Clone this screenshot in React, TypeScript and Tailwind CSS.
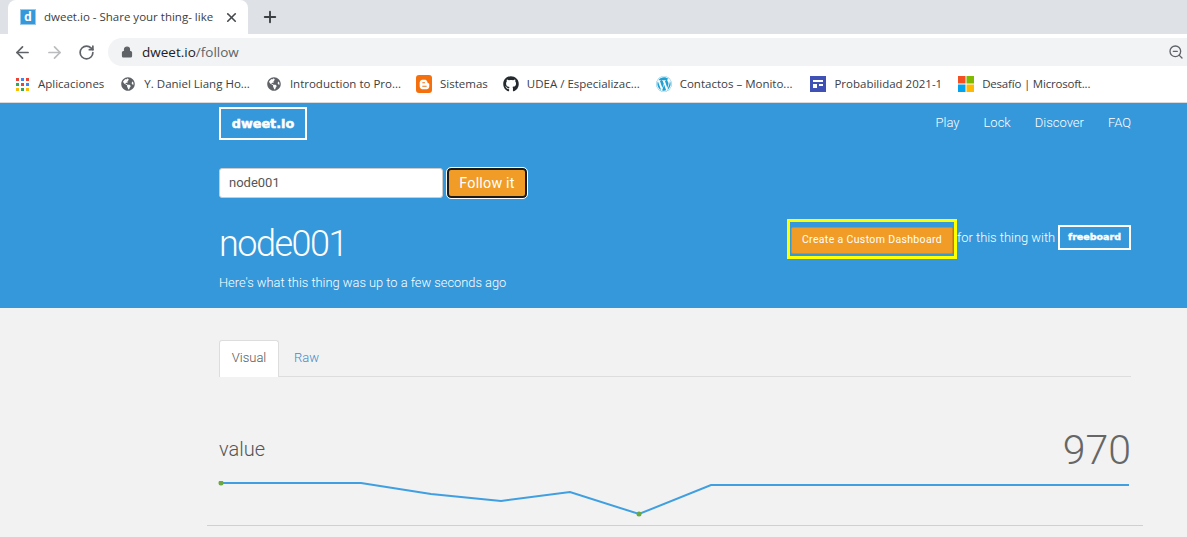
import { ArrowLeft, ArrowRight, RotateCw, Lock, X, Plus, ZoomOut } from "lucide-react";
import { FaGithub, FaWordpress, FaGlobeAmericas, FaBloggerB } from "react-icons/fa";

function Bookmark({ icon, label, className }: { icon: React.ReactNode; label: string; className: string }) {
  return (
    <div className={`flex items-center gap-[8px] ${className}`}>
      <span className="flex w-[16px] h-[16px] items-center justify-center shrink-0">{icon}</span>
      <span className="text-[11.5px] text-[#3c4043] whitespace-nowrap">{label}</span>
    </div>
  );
}

function Apps() {
  const c = ["#ea4335", "#4285f4", "#ea4335", "#34a853", "#ea4335", "#4285f4", "#fbbc05", "#34a853", "#fbbc05"];
  return (
    <div className="grid grid-cols-3 gap-[2px] w-[13px]">
      {c.map((x, i) => (
        <span key={i} className="w-[3px] h-[3px]" style={{ background: x }} />
      ))}
    </div>
  );
}

const globe = <FaGlobeAmericas className="text-[#5f6368] text-[14px]" />;

export default function App() {
  return (
    <div className="w-[1187px] h-[537px] overflow-hidden bg-[#f2f2f2] font-['Roboto',sans-serif]">
      <div className="h-[34px] bg-[#dee1e6] flex items-end pl-[8px]">
        <div className="w-[240px] h-[34px] bg-white rounded-t-[8px] flex items-center pl-[12px]">
          <span className="w-[16px] h-[16px] bg-[#3498db] border border-[#9cc9e8] flex items-center justify-center text-white text-[13px] font-bold shrink-0">d</span>
          <span className="ml-[8px] w-[170px] whitespace-nowrap text-[11.5px] text-[#3c4043] [font-family:'Open_Sans',sans-serif]">dweet.io - Share your thing- like</span>
          <X size={15} strokeWidth={2.6} className="ml-[10px] text-[#45494d] shrink-0" />
        </div>
        <Plus size={18} strokeWidth={2.5} className="ml-[13px] mb-[8px] text-[#3c4043]" />
      </div>

      <div className="h-[32px] bg-white flex items-end">
        <div className="flex items-center w-[108px] h-[28px] pl-[13px]">
          <ArrowLeft size={19} strokeWidth={2.2} className="text-[#5f6368]" />
          <ArrowRight size={19} strokeWidth={2.2} className="ml-[13px] text-[#babcbe]" />
          <RotateCw size={17} strokeWidth={2.4} className="ml-[14px] text-[#5f6368]" />
        </div>
        <div className="flex-1 h-[28px] bg-[#f1f3f4] rounded-l-[14px] flex items-center pl-[13px] pr-[3px]">
          <Lock size={12} fill="#5f6368" strokeWidth={2.4} className="text-[#5f6368]" />
          <span className="ml-[9px] text-[13.5px] text-[#202124] [font-family:'Open_Sans',sans-serif]">
            dweet.io<span className="text-[#5f6368]">/follow</span>
          </span>
          <ZoomOut size={16} strokeWidth={2} className="ml-auto text-[#5f6368]" />
        </div>
      </div>

      <div className="h-[37px] bg-white border-b border-[#d9dadb] flex items-center [&_span]:[font-family:'Open_Sans',sans-serif]">
        <Bookmark className="ml-[14px]" icon={<Apps />} label="Aplicaciones" />
        <Bookmark className="ml-[16px]" icon={globe} label="Y. Daniel Liang Ho..." />
        <Bookmark className="ml-[16px]" icon={globe} label="Introduction to Pro..." />
        <Bookmark
          className="ml-[15px]"
          icon={
            <span className="w-[16px] h-[18px] rounded-[3px] bg-[#f4700f] flex items-center justify-center">
              <FaBloggerB className="text-white text-[11px]" />
            </span>
          }
          label="Sistemas"
        />
        <Bookmark className="ml-[15px]" icon={<FaGithub className="text-[#24292e] text-[16px]" />} label="UDEA / Especializac..." />
        <Bookmark className="ml-[16px]" icon={<FaWordpress className="text-[#21a0d2] text-[16px]" />} label="Contactos – Monito..." />
        <Bookmark
          className="ml-[18px]"
          icon={
            <svg width="16" height="16" viewBox="0 0 16 16">
              <rect width="16" height="16" fill="#3f51b5" />
              <rect x="3" y="4" width="10" height="2" fill="#fff" />
              <rect x="3" y="8" width="4" height="4" fill="#fff" />
              <rect x="9" y="8" width="4" height="2" fill="#fff" />
            </svg>
          }
          label="Probabilidad 2021-1"
        />
        <Bookmark
          className="ml-[16px] tracking-[-0.2px]"
          icon={
            <svg width="16" height="16" viewBox="0 0 16 16">
              <rect width="7.5" height="7.5" fill="#f25022" />
              <rect x="8.5" width="7.5" height="7.5" fill="#7fba00" />
              <rect y="8.5" width="7.5" height="7.5" fill="#00a4ef" />
              <rect x="8.5" y="8.5" width="7.5" height="7.5" fill="#ffb900" />
            </svg>
          }
          label="Desafío | Microsoft..."
        />
      </div>

      <div className="h-[205px] bg-[#3498db] text-white">
        <div className="ml-[207px] w-[936px] px-3">
          <div className="flex items-center justify-between pt-[4px]">
            <div className="w-[88px] h-[33px] border-2 border-white flex items-center justify-center text-[12.8px] font-black [-webkit-text-stroke:0.5px_white] [font-family:'DejaVu_Sans',sans-serif]">
              dweet.io
            </div>
            <nav className="flex gap-[24px] text-[13px] font-light pb-[2px]">
              <span>Play</span>
              <span>Lock</span>
              <span>Discover</span>
              <span>FAQ</span>
            </nav>
          </div>

          <div className="flex mt-[28px] gap-[4px]">
            <div className="w-[224px] h-[30px] bg-white border border-[#ccc] rounded-[3px] flex items-center pl-[9px] text-[13px] text-[#555]">
              node001
            </div>
            <div className="w-[80px] h-[30px] pt-[1px] rounded-[4px] bg-[#f09c27] border-2 border-[#1a1a1a] outline outline-1 outline-white flex items-center justify-center text-[14.3px] tracking-[0.2px]">
              Follow it
            </div>
          </div>

          <div className="flex justify-between mt-[21px]">
            <div>
              <h1 className="text-[36px] leading-[50px] tracking-[-1.5px] font-light">node001</h1>
              <p className="mt-[4px] text-[12.85px] leading-[20px] font-light">Here's what this thing was up to a few seconds ago</p>
            </div>
            <div className="flex items-start">
              <div className="w-[170px] h-[40px] border-[3px] border-[#ffff00] flex items-center justify-center">
                <div className="w-[162px] h-[27px] mt-[2px] bg-[#f09c27] border border-[#d98a1f] rounded-[2px] flex items-center justify-center text-[10.5px] tracking-[0.35px]">
                  Create a Custom Dashboard
                </div>
              </div>
              <span className="mt-[9px] w-[98px] whitespace-nowrap text-[12.9px] font-light">for this thing with</span>
              <div className="ml-[3px] mt-[6px] w-[73px] h-[25px] border-2 border-white flex items-center justify-center text-[9.5px] font-black [-webkit-text-stroke:0.4px_white] [font-family:'DejaVu_Sans',sans-serif]">
                freeboard
              </div>
            </div>
          </div>
        </div>
      </div>

      <div className="ml-[207px] w-[936px]">
        <div className="mx-3 mt-[32px] h-[37px] border-b border-[#ddd] flex">
          <div className="w-[60px] h-[37px] pb-[2px] bg-white border border-b-0 border-[#ddd] rounded-t-[3px] flex items-center justify-center text-[13px] font-light text-[#555]">
            Visual
          </div>
          <div className="ml-[15px] h-[36px] flex items-center text-[13px] font-light text-[#428bca]">Raw</div>
        </div>
        <div className="mx-3 mt-[48px] flex items-center justify-between h-[52px]">
          <span className="text-[20px] font-light text-[#555] mt-[-4px]">value</span>
          <span className="text-[41px] font-light text-[#666]">970</span>
        </div>
        <svg width="936" height="44" viewBox="207 481 936 44" className="block mt-[4px]">
          <polyline
            points="221,483 361,483 431,494 501,501 570,492 639,514 711,485 1129,485"
            fill="none"
            stroke="#3f9fe0"
            strokeWidth="2"
          />
          <circle cx="221" cy="483" r="2.5" fill="#6aa842" />
          <circle cx="639" cy="514" r="2.5" fill="#6aa842" />
        </svg>
        <div className="h-px bg-[#d0d0d0]" />
      </div>
    </div>
  );
}
